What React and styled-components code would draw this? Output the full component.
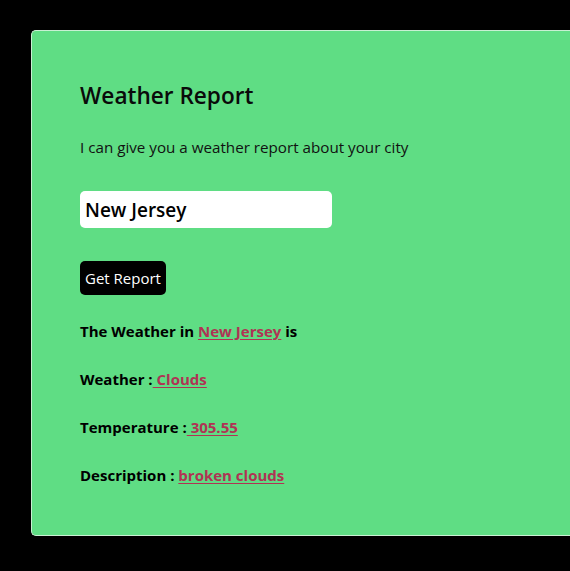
import React from 'react'
import styled, { createGlobalStyle } from 'styled-components'

const GlobalStyle = createGlobalStyle`
    html, body {
        margin: 0;
        background-color: #000;
        overflow: hidden;
    }
    body {
        font-family: "Open Sans", "Noto Sans", sans-serif;
    }
`

const Page = styled.div`
    padding: 30px 0 0 31px;
    min-height: 571px;
    box-sizing: border-box;
`

const Card = styled.div`
    width: 539px;
    box-sizing: border-box;
    background-color: #5fdd84;
    border: 1px solid #c9f0d3;
    border-right: none;
    border-radius: 5px 0 0 5px;
    padding: 48px 48px 49px 48px;
`

const Title = styled.h1`
    margin: 0;
    font-size: 22.6px;
    font-weight: 600;
    color: #0a0a0a;
    line-height: 34px;
`

const Intro = styled.p`
    margin: 23px 0 0;
    font-size: 15.2px;
    color: #111;
    line-height: 22px;
`

const CityInput = styled.input`
    display: block;
    margin-top: 33px;
    width: 252px;
    height: 37px;
    box-sizing: border-box;
    border: none;
    border-radius: 5px;
    padding: 0 5px;
    font-family: inherit;
    font-size: 19px;
    font-weight: 600;
    color: #000;
    outline: none;
`

const ReportButton = styled.button`
    display: block;
    margin-top: 33px;
    height: 34px;
    padding: 0 5px;
    background-color: #000;
    color: #fff;
    border: none;
    border-radius: 5px;
    font-family: inherit;
    font-size: 15px;
`

const Results = styled.div`
    margin-top: 25px;
    display: flex;
    flex-direction: column;
    gap: 26px;
`

const Line = styled.p`
    margin: 0;
    font-size: 15px;
    font-weight: 700;
    line-height: 22px;
    color: #000;
    white-space: pre;
`

const Value = styled.span`
    color: #b03354;
    text-decoration: underline;
    text-underline-offset: 2px;
`

export default class App extends React.Component {
    state = {
        city: "New Jersey"
    }

    onChangeCity = (event) => {
        this.setState({city: event.target.value})
    }

    render() {
        return(
            <Page>
                <GlobalStyle />
                <Card>
                    <Title>Weather Report</Title>
                    <Intro>I can give you a weather report about your city</Intro>
                    <CityInput value={this.state.city} onChange={this.onChangeCity}/>
                    <ReportButton>Get Report</ReportButton>
                    <Results>
                        <Line>The Weather in <Value>New Jersey</Value> is</Line>
                        <Line>Weather :<Value> Clouds</Value></Line>
                        <Line>Temperature :<Value> 305.55</Value></Line>
                        <Line>Description : <Value>broken clouds</Value></Line>
                    </Results>
                </Card>
            </Page>
        )
    }
}
